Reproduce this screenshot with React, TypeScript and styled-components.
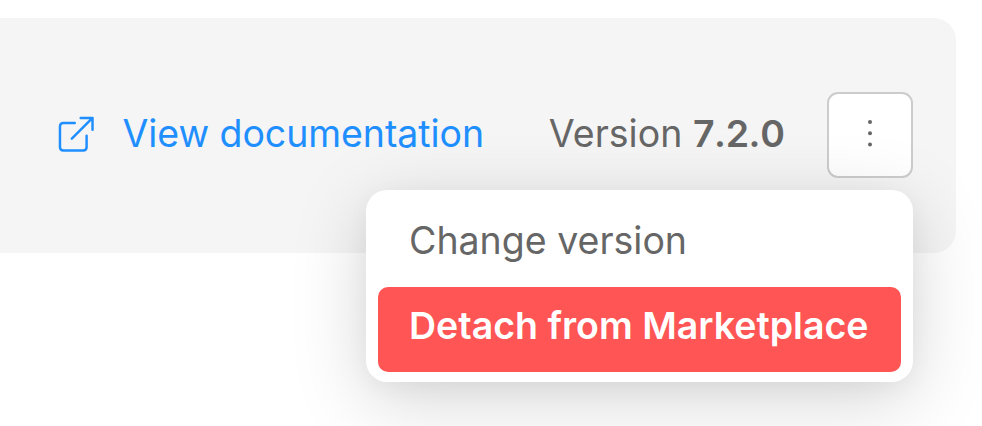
import React from "react";
import styled, { createGlobalStyle } from "styled-components";

const GlobalStyle = createGlobalStyle`
  * { box-sizing: border-box; }
  body { margin: 0; background: #fff; font-family: Inter, sans-serif; overflow: hidden; }
`;
const Page = styled.main`
  width: 982px;
  height: 426px;
  padding-top: 18px;
  overflow: hidden;
`;
const Toolbar = styled.header`
  width: 956px;
  height: 235px;
  padding: 74px 43px 0 58px;
  display: flex;
  align-items: flex-start;
  background: #f5f5f5;
  border-radius: 0 22px 22px 0;
  color: #666;
  font-size: 37.5px;
  line-height: 84px;
  white-space: nowrap;
`;
const DocumentationLink = styled.a`
  display: flex;
  align-items: center;
  gap: 28px;
  color: #1f8fff;
  text-decoration: none;
  letter-spacing: -0.07px;
  svg { width: 36.5px; height: 36.5px; }
`;
const Version = styled.div`
  margin-left: auto;
  margin-right: 42.5px;
  strong { font-weight: 600; font-kerning: none; letter-spacing: -0.4px; }
`;
const MenuAnchor = styled.div`
  position: relative;
  width: 86px;
  height: 86px;
`;
const MenuButton = styled.button`
  width: 86px;
  height: 86px;
  padding: 0 0 4px;
  display: flex;
  align-items: center;
  justify-content: center;
  border: 2.5px solid #ccc;
  border-radius: 11px;
  background: #fff;
`;
const Menu = styled.div`
  position: absolute;
  top: 98px;
  right: 0;
  width: 547px;
  height: 192px;
  padding: 12px;
  border-radius: 21px;
  background: #fff;
  box-shadow: 0 17px 75px rgba(0, 0, 0, 0.17), 0 6px 24px rgba(0, 0, 0, 0.04);
`;
const MenuItem = styled.button<{ $danger?: boolean }>`
  display: block;
  width: 100%;
  height: 85px;
  padding: 0 31px 7px;
  border: 0;
  border-radius: 10px;
  background: ${({ $danger }) => ($danger ? "#ff5555" : "transparent")};
  color: ${({ $danger }) => ($danger ? "#fff" : "#666")};
  font: ${({ $danger }) => ($danger ? 600 : 400)} 37.5px/76px Inter, sans-serif;
  text-align: left;
  white-space: nowrap;
`;

export default function App() {
  return (
    <>
      <GlobalStyle />
      <Page>
        <Toolbar>
          <DocumentationLink href="#">
            <svg viewBox="0 0 37 37" fill="none" stroke="currentColor" strokeWidth="2.5" strokeLinecap="round" strokeLinejoin="round">
              <path d="M17 7H5.5Q2 7 2 10.5V31.5Q2 35 5.5 35H25.5Q29 35 29 31.5V20M23 2H35V14M35 2L14 23" />
            </svg>
            <span>View documentation</span>
          </DocumentationLink>
          <Version>Version <strong>7.2.0</strong></Version>
          <MenuAnchor>
            <MenuButton aria-label="Version actions">
              <svg width="8" height="30" viewBox="0 0 8 30" fill="#666">
                <circle cx="4" cy="4" r="2" /><circle cx="4" cy="15.3" r="2" /><circle cx="4" cy="26.6" r="2" />
              </svg>
            </MenuButton>
            <Menu>
              <MenuItem>Change version</MenuItem>
              <MenuItem $danger>Detach from Marketplace</MenuItem>
            </Menu>
          </MenuAnchor>
        </Toolbar>
      </Page>
    </>
  );
}
